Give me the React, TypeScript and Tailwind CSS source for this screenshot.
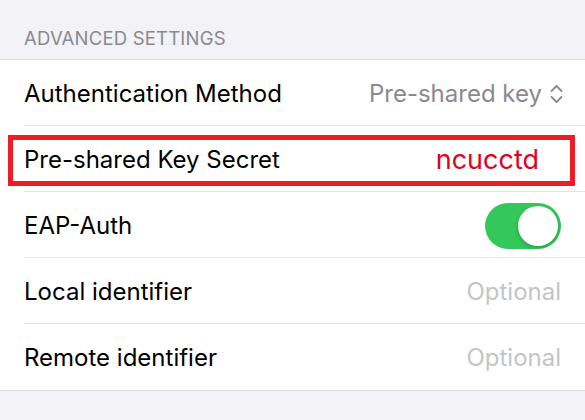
import { ReactNode } from "react";

function Chevrons() {
  return (
    <svg width="13" height="20" viewBox="0 0 13 20" fill="none" stroke="#8a8a8e" strokeWidth="1.8" strokeLinecap="round" strokeLinejoin="round" className="ml-2">
      <path d="M1.5 7 6.5 2l5 5" />
      <path d="M1.5 13l5 5 5-5" />
    </svg>
  );
}

function Toggle() {
  return (
    <div className="w-[76px] h-[46px] rounded-full bg-[#34c759] p-[3px] flex justify-end">
      <div className="w-[40px] h-[40px] rounded-full bg-white shadow-[0_2px_4px_rgba(0,0,0,0.2)]" />
    </div>
  );
}

function Row({ label, children, last }: { label: string; children?: ReactNode; last?: boolean }) {
  return (
    <div className="relative pl-6 h-[66px]">
      <div className={"h-full flex items-center justify-between pr-6 pt-[3px] " + (last ? "" : "border-b border-[#e3e3e6]")}>
        <span className="text-[24px] text-black">{label}</span>
        {children}
      </div>
    </div>
  );
}

export default function App() {
  return (
    <div className="w-[585px] h-[420px] bg-[#f2f2f7] overflow-hidden" style={{ fontFamily: "Inter, 'Open Sans', sans-serif" }}>
      <div className="pt-[25px] pb-[6px] pl-6 text-[18.5px] text-[#8a8a8e] tracking-[0.2px]">ADVANCED SETTINGS</div>
      <div className="bg-white border-y border-[#dcdce0]">
        <Row label="Authentication Method">
          <span className="flex items-center text-[24px] text-[#8a8a8e] -mr-[2px]">
            Pre-shared key
            <Chevrons />
          </span>
        </Row>
        <div className="relative">
          <Row label="Pre-shared Key Secret">
            <span className="text-[27px] text-[#e3001b] mr-[22px]">ncucctd</span>
          </Row>
          <div className="absolute left-[8px] top-[9px] w-[567px] h-[51px] border-[5px] border-[#ee1c25]" />
        </div>
        <Row label="EAP-Auth">
          <Toggle />
        </Row>
        <Row label="Local identifier">
          <span className="text-[24px] text-[#c4c4c7]">Optional</span>
        </Row>
        <Row label="Remote identifier" last>
          <span className="text-[24px] text-[#c4c4c7]">Optional</span>
        </Row>
      </div>
    </div>
  );
}
